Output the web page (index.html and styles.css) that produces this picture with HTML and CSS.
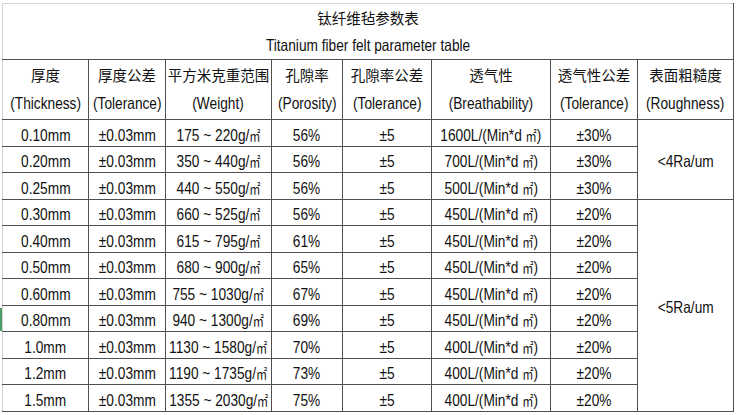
FILE: index.html
```html
<!DOCTYPE html>
<html lang="zh">
<head>
<meta charset="utf-8">
<title>钛纤维毡参数表</title>
<link rel="stylesheet" href="styles.css">
</head>
<body>
<table class="sheet">
  <colgroup>
    <col class="c1"><col class="c2"><col class="c3"><col class="c4">
    <col class="c5"><col class="c6"><col class="c7"><col class="c8">
  </colgroup>
  <thead>
    <tr class="title-row">
      <th colspan="8" class="title"><span class="zh">钛纤维毡参数表</span><br><span class="t">Titanium fiber felt parameter table</span></th>
    </tr>
    <tr class="head-row">
      <th><span class="zh">厚度</span><br><span class="t">(Thickness)</span></th>
      <th><span class="zh">厚度公差</span><br><span class="t">(Tolerance)</span></th>
      <th><span class="zh">平方米克重范围</span><br><span class="t">(Weight)</span></th>
      <th><span class="zh">孔隙率</span><br><span class="t">(Porosity)</span></th>
      <th><span class="zh">孔隙率公差</span><br><span class="t">(Tolerance)</span></th>
      <th><span class="zh">透气性</span><br><span class="t">(Breathability)</span></th>
      <th><span class="zh">透气性公差</span><br><span class="t">(Tolerance)</span></th>
      <th><span class="zh">表面粗糙度</span><br><span class="t">(Roughness)</span></th>
    </tr>
  </thead>
  <tbody>
    <tr class="r27"><td><span class="t">0.10mm</span></td><td><span class="t">±0.03mm</span></td><td><span class="t">175 ~ 220g/<span class="u">㎡</span></span></td><td><span class="t">56%</span></td><td><span class="t">±5</span></td><td><span class="t">1600L/(Min*d <span class="u">㎡</span>)</span></td><td><span class="t">±30%</span></td><td rowspan="3"><span class="t">&lt;4Ra/um</span></td></tr>
    <tr class="r26"><td><span class="t">0.20mm</span></td><td><span class="t">±0.03mm</span></td><td><span class="t">350 ~ 440g/<span class="u">㎡</span></span></td><td><span class="t">56%</span></td><td><span class="t">±5</span></td><td><span class="t">700L/(Min*d <span class="u">㎡</span>)</span></td><td><span class="t">±30%</span></td></tr>
    <tr class="r27"><td><span class="t">0.25mm</span></td><td><span class="t">±0.03mm</span></td><td><span class="t">440 ~ 550g/<span class="u">㎡</span></span></td><td><span class="t">56%</span></td><td><span class="t">±5</span></td><td><span class="t">500L/(Min*d <span class="u">㎡</span>)</span></td><td><span class="t">±30%</span></td></tr>
    <tr class="r26"><td><span class="t">0.30mm</span></td><td><span class="t">±0.03mm</span></td><td><span class="t">660 ~ 525g/<span class="u">㎡</span></span></td><td><span class="t">56%</span></td><td><span class="t">±5</span></td><td><span class="t">450L/(Min*d <span class="u">㎡</span>)</span></td><td><span class="t">±20%</span></td><td rowspan="8"><span class="t">&lt;5Ra/um</span></td></tr>
    <tr class="r27"><td><span class="t">0.40mm</span></td><td><span class="t">±0.03mm</span></td><td><span class="t">615 ~ 795g/<span class="u">㎡</span></span></td><td><span class="t">61%</span></td><td><span class="t">±5</span></td><td><span class="t">450L/(Min*d <span class="u">㎡</span>)</span></td><td><span class="t">±20%</span></td></tr>
    <tr class="r26"><td><span class="t">0.50mm</span></td><td><span class="t">±0.03mm</span></td><td><span class="t">680 ~ 900g/<span class="u">㎡</span></span></td><td><span class="t">65%</span></td><td><span class="t">±5</span></td><td><span class="t">450L/(Min*d <span class="u">㎡</span>)</span></td><td><span class="t">±20%</span></td></tr>
    <tr class="r27"><td><span class="t">0.60mm</span></td><td><span class="t">±0.03mm</span></td><td><span class="t">755 ~ 1030g/<span class="u">㎡</span></span></td><td><span class="t">67%</span></td><td><span class="t">±5</span></td><td><span class="t">450L/(Min*d <span class="u">㎡</span>)</span></td><td><span class="t">±20%</span></td></tr>
    <tr class="r26"><td class="selected"><span class="t">0.80mm</span></td><td><span class="t">±0.03mm</span></td><td><span class="t">940 ~ 1300g/<span class="u">㎡</span></span></td><td><span class="t">69%</span></td><td><span class="t">±5</span></td><td><span class="t">450L/(Min*d <span class="u">㎡</span>)</span></td><td><span class="t">±20%</span></td></tr>
    <tr class="r27"><td><span class="t">1.0mm</span></td><td><span class="t">±0.03mm</span></td><td><span class="t">1130 ~ 1580g/<span class="u">㎡</span></span></td><td><span class="t">70%</span></td><td><span class="t">±5</span></td><td><span class="t">400L/(Min*d <span class="u">㎡</span>)</span></td><td><span class="t">±20%</span></td></tr>
    <tr class="r26"><td><span class="t">1.2mm</span></td><td><span class="t">±0.03mm</span></td><td><span class="t">1190 ~ 1735g/<span class="u">㎡</span></span></td><td><span class="t">73%</span></td><td><span class="t">±5</span></td><td><span class="t">400L/(Min*d <span class="u">㎡</span>)</span></td><td><span class="t">±20%</span></td></tr>
    <tr class="r27"><td><span class="t">1.5mm</span></td><td><span class="t">±0.03mm</span></td><td><span class="t">1355 ~ 2030g/<span class="u">㎡</span></span></td><td><span class="t">75%</span></td><td><span class="t">±5</span></td><td><span class="t">400L/(Min*d <span class="u">㎡</span>)</span></td><td><span class="t">±20%</span></td></tr>
  </tbody>
</table>
</body>
</html>
```

FILE: styles.css
```css
html, body {
  margin: 0;
  padding: 0;
  background: #ffffff;
}

body {
  padding: 3px 0 0 2px;
  font-family: "Liberation Sans", "Noto Sans CJK SC", sans-serif;
  color: #111111;
}

.sheet {
  border-collapse: collapse;
  table-layout: fixed;
  width: 731px;
  border-left: 1px solid #d4d4d4;
}

.c1 { width: 86px; }
.c2 { width: 77px; }
.c3 { width: 106px; }
.c4 { width: 71px; }
.c5 { width: 89px; }
.c6 { width: 119px; }
.c7 { width: 87px; }
.c8 { width: 96px; }

.sheet th,
.sheet td {
  border: 1px solid #4f4f4f;
  padding: 0;
  text-align: center;
  vertical-align: middle;
  white-space: nowrap;
  font-weight: normal;
  font-size: 16.5px;
}

.sheet tr > :first-child {
  border-left-color: #d4d4d4;
}

.title-row { height: 55px; }
.sheet .title {
  line-height: 27px;
  border-top-color: #d4d4d4;
}

.head-row { height: 60px; }
.head-row th {
  line-height: 28px;
  padding-bottom: 2px;
}

.zh {
  font-family: "Noto Sans CJK SC", sans-serif;
  font-size: 14.5px;
  font-weight: 400;
}

/* Excel-style horizontally condensed text */
.t {
  display: inline-block;
  transform: scaleX(0.83);
  margin: 0 -20px;
}

.sheet td {
  line-height: 20px;
  padding-top: 3px;
}

.r27 { height: 27px; }
.r26 { height: 26px; }

.u {
  font-family: "Noto Sans CJK SC", sans-serif;
  font-size: 13.5px;
}

.selected {
  position: relative;
}
.selected::before {
  content: "";
  position: absolute;
  left: -3px;
  top: 2px;
  bottom: 0;
  width: 2px;
  background: #4f9a6a;
}
```
